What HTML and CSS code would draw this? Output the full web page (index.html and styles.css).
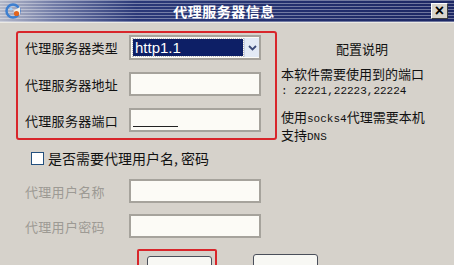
FILE: index.html
```html
<!DOCTYPE html>
<html lang="zh-CN">

<head>
    <meta charset="UTF-8">
    <title>代理服务器信息</title>
    <link rel="stylesheet" href="styles.css">
</head>

<body>
    <div class="window">
        <!-- Title bar -->
        <div class="titlebar">
            <svg class="app-icon" width="20" height="18" viewBox="0 0 20 18">
                <circle cx="10" cy="9" r="6.5" fill="none" stroke="#3d7fd0" stroke-width="2.5"/>
                <path d="M10 9 L17 5 L17 13 Z" fill="#f2f0ea"/>
                <circle cx="13.5" cy="11.5" r="2.6" fill="#e2651e"/>
                <circle cx="8" cy="7" r="1.4" fill="#9fd0ff"/>
            </svg>
            <span class="title">代理服务器信息</span>
            <span class="close-btn">×</span>
        </div>

        <div class="content">
            <div class="left">
                <div class="proxy-box">
                    <div class="row">
                        <label class="lbl">代理服务器类型</label>
                        <div class="select">
                            <span class="select-value">http1.1</span>
                            <span class="select-arrow">
                                <svg width="9" height="6" viewBox="0 0 9 6"><path d="M1 1 L4.5 4.5 L8 1" fill="none" stroke="#3b4a78" stroke-width="1.8"/></svg>
                            </span>
                        </div>
                    </div>
                    <div class="row">
                        <label class="lbl">代理服务器地址</label>
                        <div class="field"></div>
                    </div>
                    <div class="row">
                        <label class="lbl">代理服务器端口</label>
                        <div class="field"><span class="caret-line"></span></div>
                    </div>
                </div>

                <div class="check-row">
                    <span class="checkbox"></span>
                    <span>是否需要代理用户名, 密码</span>
                </div>

                <div class="user-rows">
                    <div class="row">
                        <label class="lbl disabled">代理用户名称</label>
                        <div class="field"></div>
                    </div>
                    <div class="row">
                        <label class="lbl disabled">代理用户密码</label>
                        <div class="field"></div>
                    </div>
                </div>

                <div class="buttons">
                    <div class="btn-mark"><div class="btn"></div></div>
                    <div class="btn"></div>
                </div>
            </div>

            <div class="notes">
                <div class="notes-title">配置说明</div>
                <p>本软件需要使用到的端口<br><span class="mono">: 22221,22223,22224</span></p>
                <p>使用<span class="mono">socks4</span>代理需要本机<br>支持<span class="mono">DNS</span></p>
            </div>
        </div>
    </div>
</body>

</html>
```

FILE: styles.css
```css
/* Base window */
body {
    margin: 0;
    background-color: #d6d2cb;
    font-family: "Noto Sans CJK SC", "Liberation Sans", sans-serif;
    font-size: 13px;
    color: #111;
}

.window {
    width: 454px;
    height: 265px;
    overflow: hidden;
    background-color: #d6d2cb;
}

/* Title bar */
.titlebar {
    height: 22px;
    display: flex;
    align-items: center;
    background:
        repeating-linear-gradient(to bottom, rgba(255, 255, 255, 0.36) 0 1px, transparent 1px 3px),
        linear-gradient(to right, #b4b8c8 0, #6f7aa6 12%, #2a3878 30%, #1c2764 100%);
    border-bottom: 1px solid #eceae4;
}

.app-icon {
    margin-left: 3px;
}

.title {
    flex: 1;
    text-align: center;
    color: #fff;
    font-weight: bold;
    font-size: 14px;
    letter-spacing: 0.5px;
    margin-left: -6px;
}

.close-btn {
    width: 15px;
    height: 14px;
    margin-right: 6px;
    background-color: #d8d4cd;
    border-top: 1px solid #fff;
    border-left: 1px solid #fff;
    border-right: 1px solid #404040;
    border-bottom: 1px solid #404040;
    font-family: "Liberation Sans", sans-serif;
    font-weight: bold;
    font-size: 16px;
    line-height: 13px;
    text-align: center;
    color: #000;
}

/* Content */
.content {
    display: flex;
    padding: 8px 0 0 16px;
}

.left {
    width: 261px;
    flex-shrink: 0;
}

.proxy-box {
    border: 2px solid #d8262b;
    border-radius: 3px;
    padding: 2px 14px 6px 7px;
    display: flex;
    flex-direction: column;
    gap: 12px;
}

.row {
    display: flex;
    align-items: center;
}

.lbl {
    width: 104px;
    flex-shrink: 0;
    letter-spacing: 0.3px;
}

.lbl.disabled {
    color: #9d9a94;
}

.field {
    width: 128px;
    height: 20px;
    background-color: #fcfbf6;
    border: 2px solid #a6a39c;
    position: relative;
}

.caret-line {
    position: absolute;
    left: 2px;
    bottom: 3px;
    width: 45px;
    height: 1px;
    background-color: #222;
}

/* Dropdown */
.select {
    width: 128px;
    height: 19px;
    background-color: #fcfbf6;
    border: 2px solid #a6a39c;
    display: flex;
    align-items: center;
    padding: 1px 0;
}

.select-value {
    flex: 1;
    height: 17px;
    margin: 0 1px 0 2px;
    background-color: #0d1f66;
    outline: 1px dotted #b8b8b8;
    color: #fff;
    font-family: "Liberation Sans", sans-serif;
    font-size: 15px;
    line-height: 17px;
    padding-left: 2px;
}

.select-arrow {
    width: 14px;
    height: 19px;
    background-color: #e3eaf5;
    border-left: 1px solid #c8d2e6;
    display: flex;
    align-items: center;
    justify-content: center;
}

/* Checkbox */
.check-row {
    display: flex;
    align-items: center;
    gap: 4px;
    margin: 8px 0 0 15px;
    font-size: 14px;
}

.checkbox {
    width: 11px;
    height: 11px;
    border: 1px solid #23507e;
    background-color: #fff;
}

.user-rows {
    margin-top: 11px;
    padding-left: 9px;
    display: flex;
    flex-direction: column;
    gap: 11px;
}

/* Buttons */
.buttons {
    display: flex;
    align-items: flex-start;
    margin: 11px 0 0 121px;
    gap: 36px;
}

.btn-mark {
    width: 80px;
    height: 24px;
    flex-shrink: 0;
    border: 2px solid #d8262b;
    border-radius: 2px;
    padding: 5px 0 0 8px;
    box-sizing: border-box;
}

.btn {
    width: 63px;
    height: 20px;
    flex-shrink: 0;
    background-color: #f8f8f4;
    border: 1px solid #4a4f5a;
    border-radius: 3px;
}

.buttons > .btn {
    margin-top: 5px;
}

/* Notes column */
.notes {
    margin-left: 4px;
    width: 170px;
    padding-top: 10px;
    line-height: 15px;
}

.notes-title {
    text-align: center;
    margin: 0 0 10px -8px;
    font-size: 13px;
}

.notes p {
    margin: 0 0 10px;
    white-space: nowrap;
}

.mono {
    font-family: "Liberation Mono", monospace;
    font-size: 11px;
}
```
